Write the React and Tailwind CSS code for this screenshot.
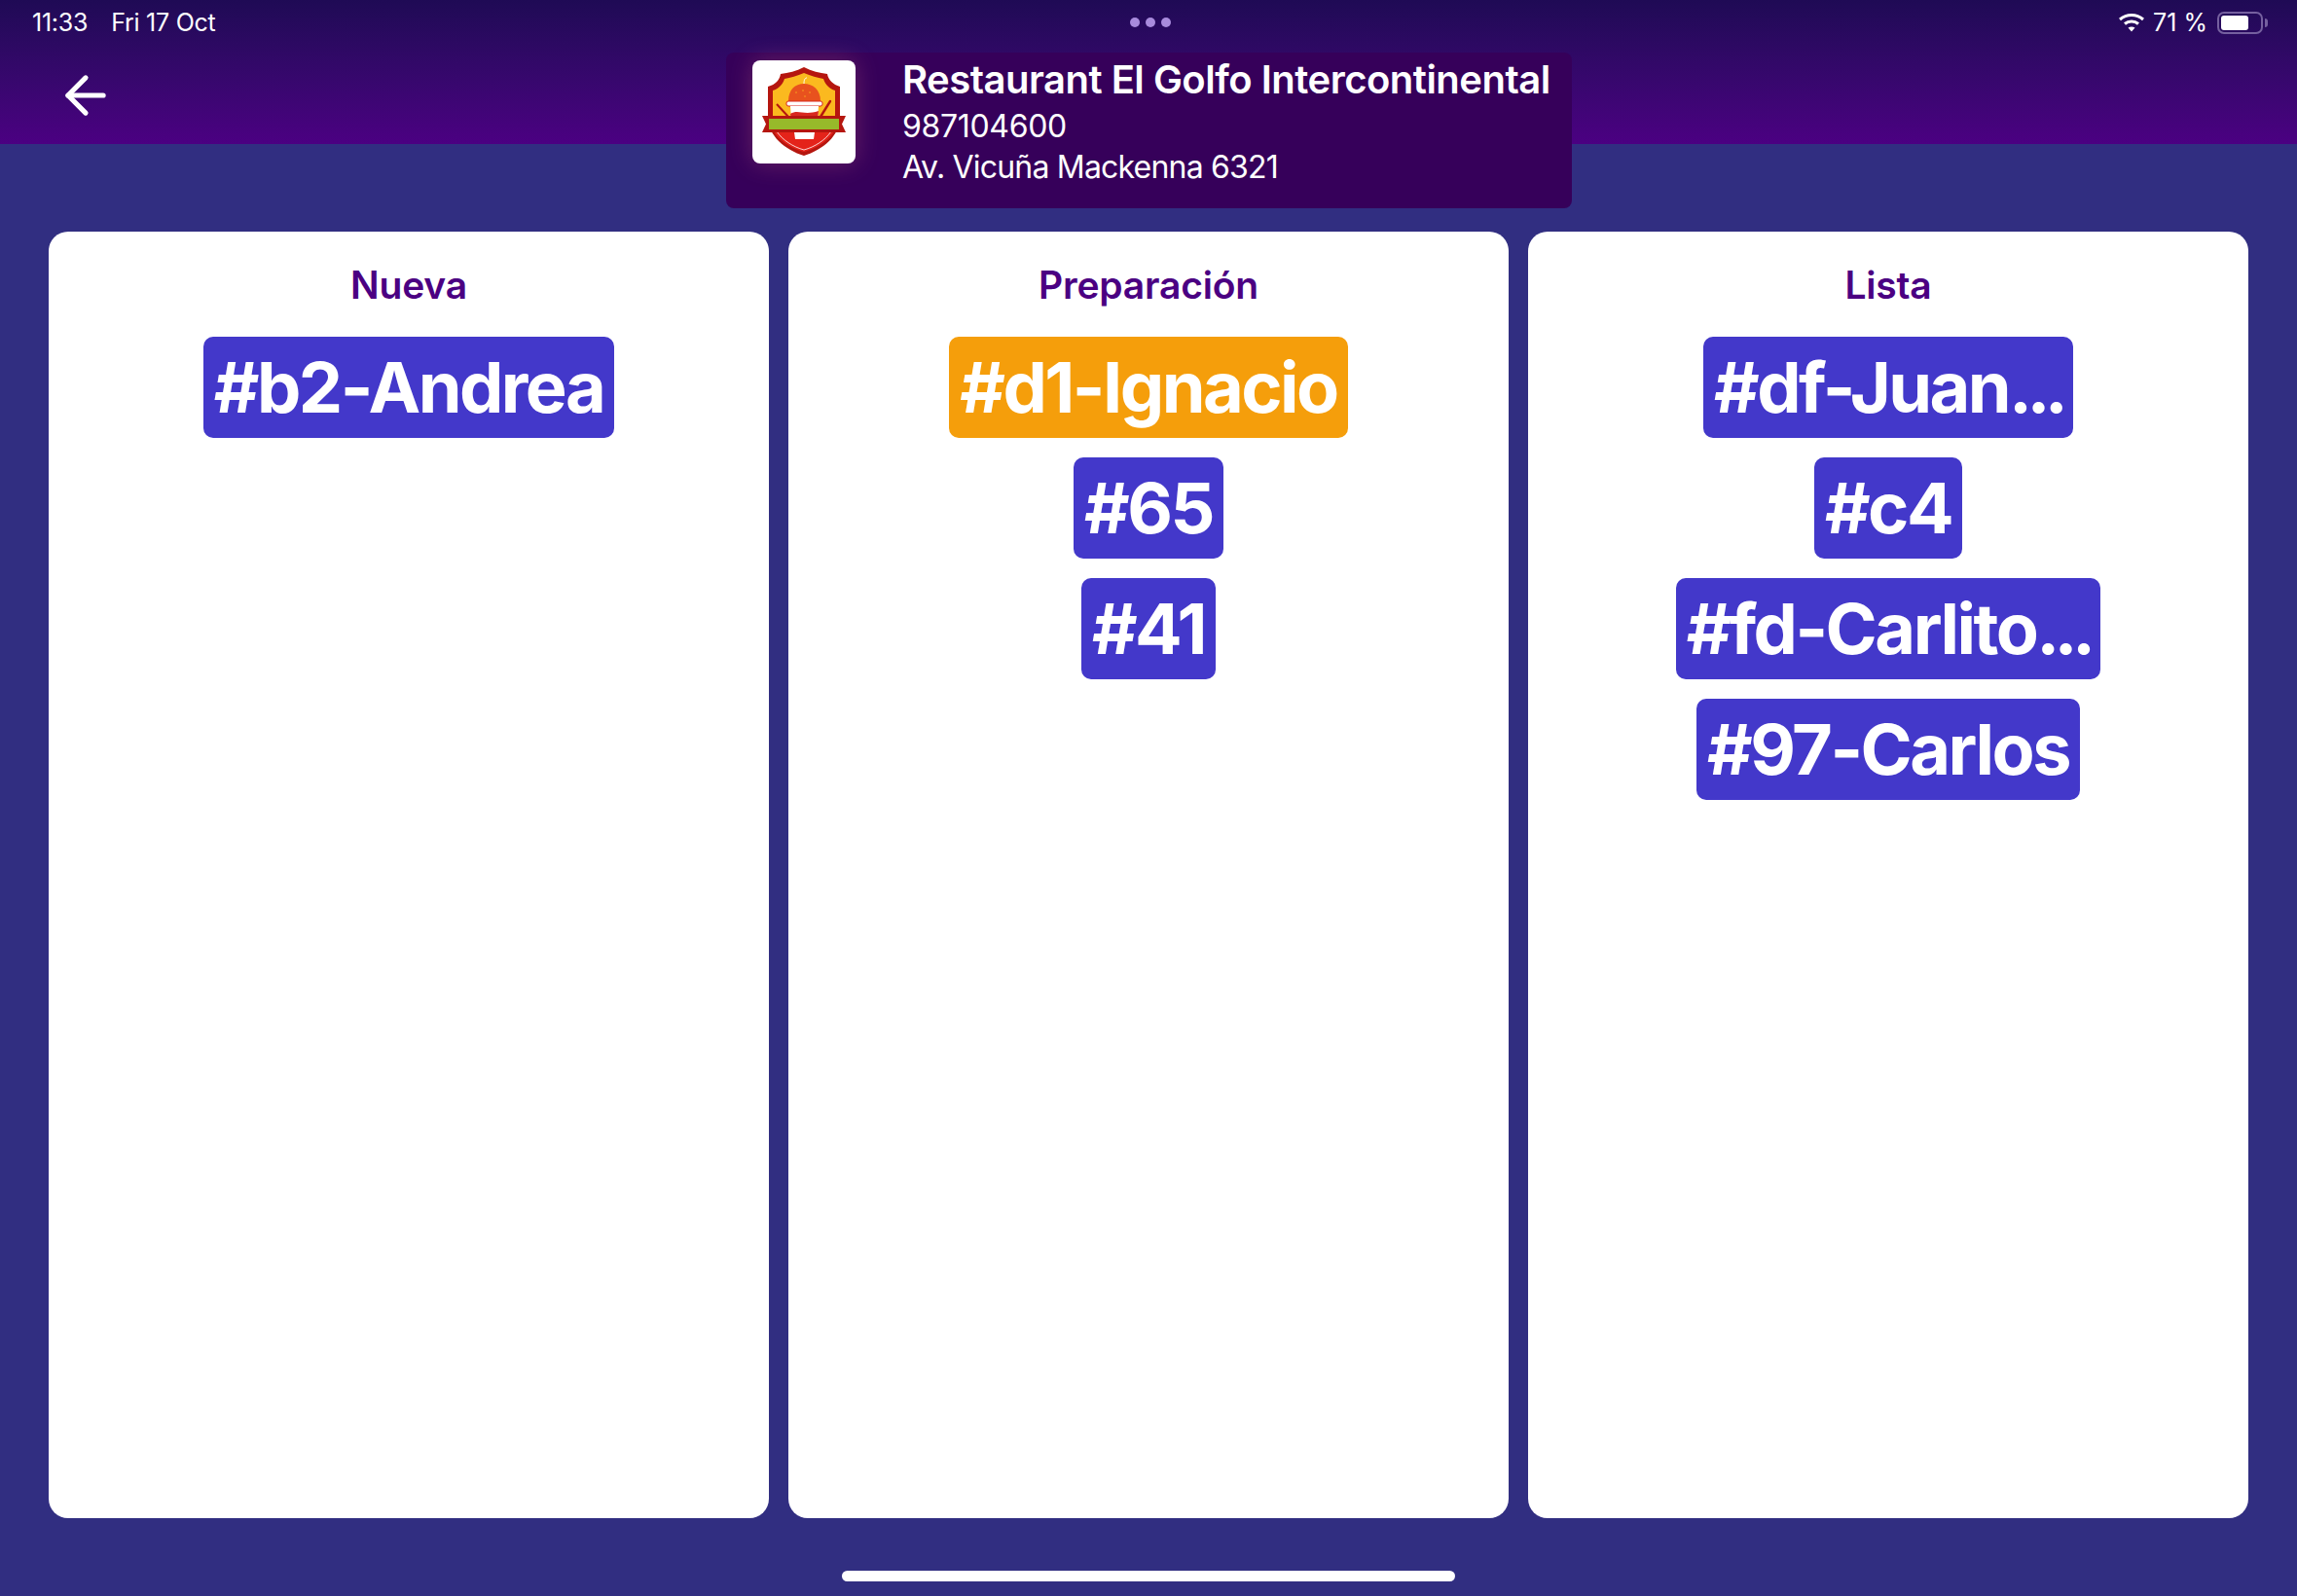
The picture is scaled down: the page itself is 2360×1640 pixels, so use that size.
import React from "react";
import { ArrowLeft } from "lucide-react";

const columns = [
  { title: "Nueva", orders: [{ label: "#b2-Andrea" }] },
  {
    title: "Preparación",
    orders: [{ label: "#d1-Ignacio", active: true }, { label: "#65" }, { label: "#41" }],
  },
  {
    title: "Lista",
    orders: [
      { label: "#df-Juan", cut: true },
      { label: "#c4" },
      { label: "#fd-Carlito", cut: true },
      { label: "#97-Carlos" },
    ],
  },
];

// restaurant logo
function Logo() {
  return (
    <svg viewBox="0 0 106 106" className="w-[106px] h-[106px]">
      <path d="M53 7 C61 11 69 13 77 14 C78 20 83 25 90 27 L90 58 C90 78 72 92 53 98 C34 92 16 78 16 58 L16 27 C24 25 28 20 29 14 C37 13 45 11 53 7 Z" fill="#b5160f" />
      <path d="M53 13 C60 16 67 18 73 19 C75 25 79 29 85 31 L85 58 L21 58 L21 31 C27 29 31 25 33 19 C39 18 46 16 53 13 Z" fill="#fbb91f" />
      <path d="M21 70 L85 70 C82 80 68 90 53 94 C38 90 24 80 21 70 Z" fill="#e4231a" />
      <path d="M25 73 C31 82 42 89 53 92 C64 89 75 82 81 73" fill="none" stroke="#ffffff" strokeWidth="0.8" />
      <path d="M25 45 L37 58" stroke="#b5160f" strokeWidth="2" />
      <path d="M80 42 L70 58" stroke="#b5160f" strokeWidth="2.4" strokeLinecap="round" />
      <path d="M37 42 C37 30 44 24 53 24 C62 24 70 30 70 42 Z" fill="#e8521e" />
      <path d="M53 24 C53 20 54 18 56 18" fill="none" stroke="#ffffff" strokeWidth="1" />
      <circle cx="45" cy="33" r="0.7" fill="#fbb91f" />
      <circle cx="52" cy="31" r="0.7" fill="#fbb91f" />
      <circle cx="59" cy="33" r="0.7" fill="#fbb91f" />
      <circle cx="54" cy="37" r="0.7" fill="#fbb91f" />
      <rect x="35" y="42" width="37" height="5" rx="2" fill="#ffffff" stroke="#d8281f" strokeWidth="1" />
      <path d="M39 47 L68 47 L67 60 L40 60 Z" fill="#ffffff" />
      <path d="M39 55 C47 50 53 57 68 52 L67 60 L40 60 Z" fill="#d8281f" />
      <path d="M10 57 L20 57 L20 74 L10 74 L14 65.5 Z" fill="#b5160f" />
      <path d="M96 57 L86 57 L86 74 L96 74 L92 65.5 Z" fill="#b5160f" />
      <rect x="18" y="57" width="70" height="17" fill="#b5160f" />
      <rect x="17" y="60" width="72" height="11" fill="#97ba2a" />
      <path d="M43 74 L64 74 L63 81 L44 81 Z" fill="#ffffff" />
    </svg>
  );
}

function StatusBar() {
  return (
    <div className="absolute top-0 left-0 w-full h-[46px] flex items-center justify-between pl-[33px] pr-[30px] text-white text-[25px] leading-none">
      <div className="flex gap-[24px] w-[400px] tracking-[-0.01em]">
        <span>11:33</span>
        <span>Fri 17 Oct</span>
      </div>
      <div className="flex gap-[6px]">
        <div className="w-[10px] h-[10px] rounded-full bg-[#a88bdc]" />
        <div className="w-[10px] h-[10px] rounded-full bg-[#a88bdc]" />
        <div className="w-[10px] h-[10px] rounded-full bg-[#a88bdc]" />
      </div>
      <div className="flex items-center justify-end w-[400px]">
        <svg viewBox="0 0 28 20" className="w-[28px] h-[20px] mr-[8px]" fill="none" stroke="#ffffff" strokeWidth="3">
          <path d="M2 7 C9 1 19 1 26 7" />
          <path d="M7 11.5 C11 8 17 8 21 11.5" />
          <path d="M14 19.5 L10.5 15.5 C12.5 14 15.5 14 17.5 15.5 Z" fill="#ffffff" stroke="none" />
        </svg>
        <span className="mr-[10px]">71 %</span>
        <div className="w-[47px] h-[23px] rounded-[7px] border-2 border-[#75609f] p-[2px]">
          <div className="w-[28px] h-full rounded-[3px] bg-white" />
        </div>
        <div className="w-[3px] h-[9px] ml-[2px] rounded-r-full bg-[#75609f]" />
      </div>
    </div>
  );
}

function Column({ title, orders }) {
  return (
    <div className="flex-1 bg-white rounded-[20px] flex flex-col items-center pt-[32px]">
      <h2 className="text-[39px] leading-[46px] font-semibold tracking-[-0.005em] text-[#4b0082] mb-[30px]">{title}</h2>
      <div className="flex flex-col items-center gap-[20px]">
        {orders.map((order) => (
          <div
            key={order.label}
            className={`h-[104px] px-[11px] rounded-[10px] flex items-center text-white text-[72px] leading-none font-bold tracking-[-0.035em] ${
              order.active ? "bg-[#f59e0b]" : "bg-[#4338ca]"
            }`}
          >
            {order.label}
            {order.cut && <span className="tracking-[-0.08em]">...</span>}
          </div>
        ))}
      </div>
    </div>
  );
}

export default function App() {
  return (
    <div className="relative w-[2360px] h-[1640px] bg-[#312e81] overflow-hidden flex flex-col font-['Inter',sans-serif]">
      <div className="relative h-[148px] bg-gradient-to-b from-[#1f0a55] to-[#4b0082]">
        <StatusBar />
        <ArrowLeft size={62} strokeWidth={2} className="absolute left-[57px] top-[67px] text-white" />
        {/* info box hangs over the page below */}
        <div className="absolute left-[746px] top-[54px] w-[869px] h-[160px] bg-[#36005a] rounded-[8px] flex">
          <div className="ml-[27px] mt-[8px] w-[106px] h-[106px] bg-white rounded-[8px] shadow-[0_0_24px_rgba(255,130,130,0.25)]">
            <Logo />
          </div>
          <div className="ml-[48px] text-white">
            <p className="text-[40px] leading-[52px] font-semibold tracking-[-0.0125em] mt-[2px] whitespace-nowrap">Restaurant El Golfo Intercontinental</p>
            <p className="text-[32px] leading-[42px] tracking-[-0.01em] mt-[1px]">987104600</p>
            <p className="text-[32px] leading-[42px] tracking-[-0.025em]">Av. Vicuña Mackenna 6321</p>
          </div>
        </div>
      </div>
      <div className="flex gap-[20px] px-[50px] mt-[90px] h-[1322px]">
        {columns.map((col) => (
          <Column key={col.title} title={col.title} orders={col.orders} />
        ))}
      </div>
      <div className="mt-[54px] mx-auto w-[630px] h-[11px] rounded-full bg-white" />
    </div>
  );
}
